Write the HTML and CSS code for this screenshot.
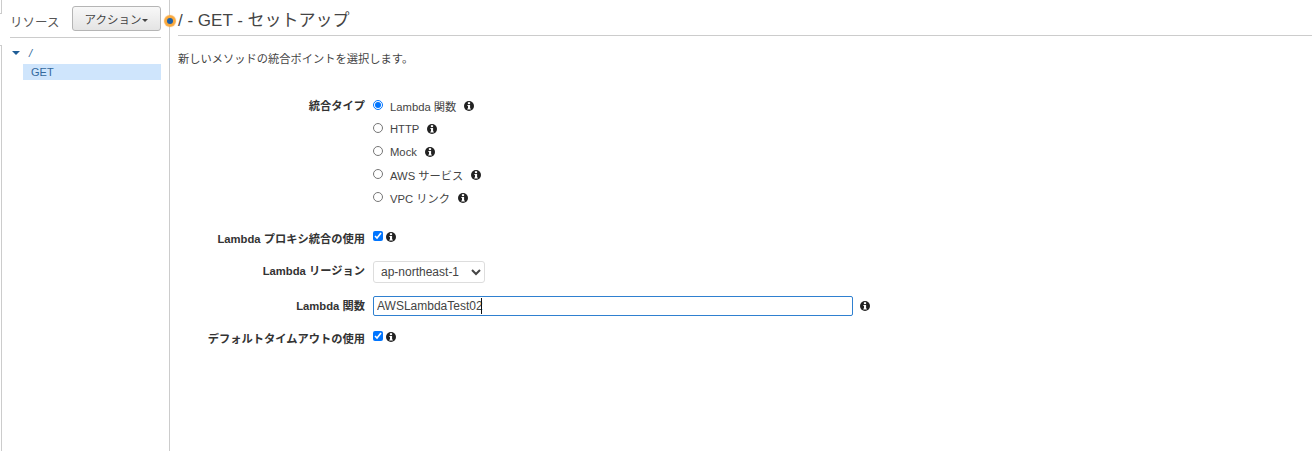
FILE: index.html
```html
<!DOCTYPE html>
<html lang="ja">
<head>
    <meta charset="UTF-8">
    <title>/ - GET - セットアップ</title>
    <link rel="stylesheet" href="styles.css">
</head>
<body>
    <svg class="icon-defs" width="0" height="0">
        <symbol id="info" viewBox="0 0 12 12">
            <circle cx="6" cy="6" r="5" fill="#222"/>
            <rect x="4.9" y="2.2" width="2.2" height="1.9" fill="#fff"/>
            <path d="M4.4 5h2.7v3.4h.7v1.1H4.3V8.4H5V6.1h-.6z" fill="#fff"/>
        </symbol>
    </svg>
    <div class="page">
        <aside class="sidebar">
            <div class="sidebar-head">
                <span class="sidebar-title">リソース</span>
                <button class="action-btn">アクション<span class="caret"></span></button>
            </div>
            <ul class="tree">
                <li class="tree-root"><span class="tree-arrow"></span><span class="tree-path">/</span></li>
                <li class="tree-method">GET</li>
            </ul>
        </aside>
        <main class="content">
            <span class="status-dot"></span>
            <h1 class="title">/ - GET - セットアップ</h1>
            <p class="intro">新しいメソッドの統合ポイントを選択します。</p>

            <div class="form-row row-type">
                <div class="form-label">統合タイプ</div>
                <div class="radio-list">
                    <label class="radio-item"><input type="radio" name="type" checked>Lambda 関数<svg class="info"><use href="#info"/></svg></label>
                    <label class="radio-item"><input type="radio" name="type">HTTP<svg class="info"><use href="#info"/></svg></label>
                    <label class="radio-item"><input type="radio" name="type">Mock<svg class="info"><use href="#info"/></svg></label>
                    <label class="radio-item"><input type="radio" name="type">AWS サービス<svg class="info"><use href="#info"/></svg></label>
                    <label class="radio-item"><input type="radio" name="type">VPC リンク<svg class="info"><use href="#info"/></svg></label>
                </div>
            </div>

            <div class="form-row row-proxy">
                <div class="form-label">Lambda プロキシ統合の使用</div>
                <div class="check-wrap"><input type="checkbox" checked><svg class="info"><use href="#info"/></svg></div>
            </div>

            <div class="form-row row-region">
                <div class="form-label">Lambda リージョン</div>
                <select class="region-select"><option>ap-northeast-1</option></select>
            </div>

            <div class="form-row row-function">
                <div class="form-label">Lambda 関数</div>
                <div class="input-wrap">
                    <input class="function-input" type="text" value="AWSLambdaTest02">
                    <span class="text-cursor"></span>
                </div>
                <svg class="info"><use href="#info"/></svg>
            </div>

            <div class="form-row row-timeout">
                <div class="form-label">デフォルトタイムアウトの使用</div>
                <div class="check-wrap"><input type="checkbox" checked><svg class="info"><use href="#info"/></svg></div>
            </div>
        </main>
    </div>
</body>
</html>
```

FILE: styles.css
```css
html, body {
    margin: 0;
    height: 100%;
    overflow: hidden;
}
body {
    font-family: "Liberation Sans", "Noto Sans CJK JP", sans-serif;
    font-size: 11.25px;
    color: #444;
    background-color: #fff;
}
.icon-defs {
    position: absolute;
}
.page {
    display: flex;
    height: 451px;
}
.sidebar {
    position: relative;
    width: 170px;
    flex: none;
    box-sizing: border-box;
    border-right: 1px solid #ccc;
    padding: 6px 8px 0 10px;
}
/* edge of the collapsed panel behind the sidebar */
.sidebar::before {
    content: "";
    position: absolute;
    left: 0;
    top: -1px;
    width: 1px;
    height: 14px;
    border: solid #ccc;
    border-width: 0 1px 1px 0;
}
.sidebar::after {
    content: "";
    position: absolute;
    left: 0;
    top: 45px;
    bottom: 0;
    width: 1px;
    border: solid #ccc;
    border-width: 1px 1px 0 0;
}
.sidebar-head {
    display: flex;
    align-items: center;
    justify-content: space-between;
    height: 31px;
    border-bottom: 1px solid #ccc;
}
.sidebar-title {
    font-size: 12.5px;
    color: #555;
}
.action-btn {
    width: 89px;
    height: 25px;
    margin: 0 0 6px;
    padding: 0;
    border: 1px solid #b5b5b5;
    border-radius: 3px;
    background: linear-gradient(#f8f8f8, #e4e4e4);
    font-family: inherit;
    font-size: 11.5px;
    color: #444;
}
.caret {
    display: inline-block;
    margin-left: 1px;
    vertical-align: 2px;
    border-left: 3px solid transparent;
    border-right: 3px solid transparent;
    border-top: 3px solid #444;
}
.tree {
    list-style: none;
    margin: 7px 0 0;
    padding: 0;
}
.tree-root {
    display: flex;
    align-items: center;
    height: 15px;
    color: #33689c;
}
.tree-arrow {
    width: 0;
    height: 0;
    margin: 1px 9px 0 2px;
    border-left: 4px solid transparent;
    border-right: 4px solid transparent;
    border-top: 4px solid #1f5d96;
}
.tree-path {
    font-style: italic;
}
.tree-method {
    margin: 4px 0 0 13px;
    padding-left: 8px;
    height: 16px;
    line-height: 16px;
    background-color: #cfe5fc;
    color: #33689c;
    font-size: 11px;
}
.content {
    position: relative;
    flex: 1;
    padding-left: 8px;
}
.status-dot {
    position: absolute;
    left: -3px;
    top: 18px;
    width: 6px;
    height: 6px;
    border-radius: 50%;
    background-color: #1b5fa8;
    box-shadow: 0 0 1px 3px #f9a83c;
}
.title {
    margin: 0;
    height: 36px;
    line-height: 42px;
    box-sizing: border-box;
    border-bottom: 1px solid #ccc;
    font-size: 17px;
    font-weight: normal;
    color: #444;
}
.intro {
    margin: 14px 0 0;
    line-height: 18px;
    color: #444;
}
.form-row {
    display: flex;
    align-items: flex-start;
}
.form-label {
    width: 187px;
    margin-right: 8px;
    flex: none;
    text-align: right;
    font-weight: bold;
    line-height: 18px;
    color: #333;
}
.row-type {
    margin-top: 29px;
}
.radio-list {
    display: flex;
    flex-direction: column;
    gap: 5px;
}
.radio-item {
    display: flex;
    align-items: center;
    height: 18px;
    color: #444;
}
.radio-item input {
    width: 10px;
    height: 10px;
    margin: 0 7px 3px 0;
}
.info {
    width: 12px;
    height: 12px;
    margin-left: 7px;
    flex: none;
}
.check-wrap {
    display: flex;
    align-items: flex-start;
}
.check-wrap input {
    width: 10px;
    height: 10px;
    margin: 1px 0 0;
}
.check-wrap .info {
    margin: 1px 0 0 2px;
}
.row-proxy {
    margin-top: 23px;
}
.row-region {
    margin-top: 13px;
    align-items: center;
}
.row-region .form-label {
    margin-top: -2px;
}
.region-select {
    width: 112px;
    height: 22px;
    padding: 0 0 0 3px;
    border: 1px solid #ddd;
    border-radius: 3px;
    background-color: #fff;
    font-family: inherit;
    font-size: 12px;
    color: #444;
}
.row-function {
    margin-top: 13px;
    align-items: center;
}
.input-wrap {
    position: relative;
}
.function-input {
    display: block;
    width: 480px;
    height: 20px;
    box-sizing: border-box;
    padding: 0 3px;
    border: 1px solid #2f80d0;
    border-radius: 2px;
    outline: none;
    font-family: inherit;
    font-size: 12px;
    color: #444;
}
.text-cursor {
    position: absolute;
    left: 108px;
    top: 2px;
    width: 1px;
    height: 16px;
    background-color: #111;
}
.row-function .info {
    margin-left: 6px;
}
.row-timeout {
    margin-top: 14px;
}
```
